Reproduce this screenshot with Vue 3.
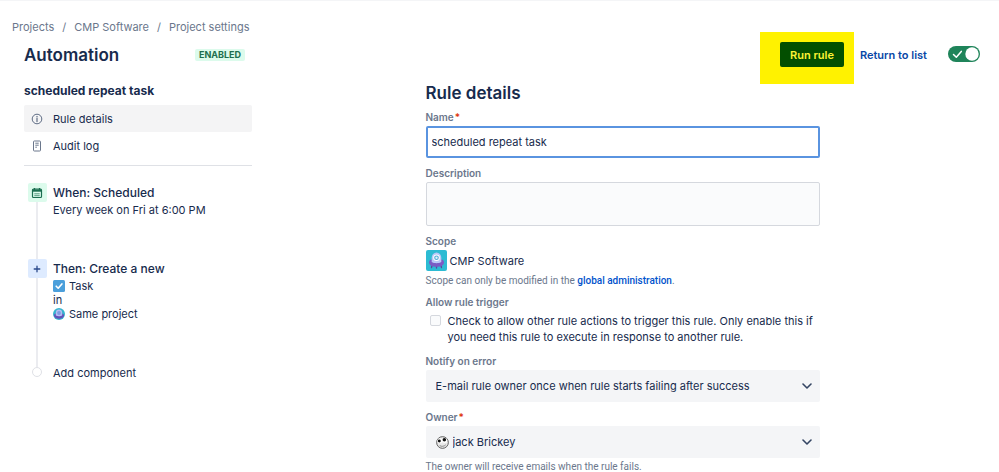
<script setup>
import { ref } from 'vue'

const crumbs = ['Projects', 'CMP Software', 'Project settings']
const enabled = ref(true)
const name = ref('scheduled repeat task')
const description = ref('')
const allowTrigger = ref(false)
const notify = ref('E-mail rule owner once when rule starts failing after success')
const owner = ref('jack Brickey')
</script>

<template>
  <div class="page">
    <nav class="crumbs" aria-label="Breadcrumbs">
      <template v-for="(crumb, i) in crumbs" :key="crumb">
        <span v-if="i > 0" class="slash">/</span>
        <a href="#">{{ crumb }}</a>
      </template>
    </nav>

    <header class="header">
      <div class="heading">
        <h1>Automation</h1>
        <span class="badge">ENABLED</span>
      </div>
      <div class="actions">
        <div class="highlight">
          <button type="button" class="run">Run rule</button>
        </div>
        <a href="#" class="return">Return to list</a>
        <label class="toggle">
          <input v-model="enabled" type="checkbox" role="switch" aria-label="Rule enabled" />
          <svg viewBox="0 0 32 16" width="32" height="16" aria-hidden="true">
            <path d="M5.500 8.500l2.800 2.700 5-5.800" fill="none" stroke="#fff" stroke-width="1.500" stroke-linecap="round" stroke-linejoin="round" />
            <circle cx="24" cy="8" r="6.700" fill="#fff" />
          </svg>
        </label>
      </div>
    </header>

    <div class="body">
      <aside class="sidebar">
        <h2 class="rule-name">{{ name }}</h2>
        <nav class="menu" aria-label="Rule">
          <a href="#" class="item active">
            <svg viewBox="0 0 12 12" width="12" height="12" aria-hidden="true">
              <circle cx="6" cy="6" r="4.800" fill="none" stroke="#5e6c84" />
              <circle cx="6" cy="3.700" r=".750" fill="#5e6c84" />
              <path d="M6 5.400v3.200" stroke="#5e6c84" stroke-width="1.200" stroke-linecap="round" />
            </svg>
            Rule details
          </a>
          <a href="#" class="item">
            <svg viewBox="0 0 12 12" width="12" height="12" aria-hidden="true">
              <rect x="2.500" y="1" width="7" height="10" rx=".8" fill="none" stroke="#6b778c" />
              <path d="M4.300 3.200h3.400M4.300 5.200h3.400M4.300 7.200h1.600" stroke="#6b778c" />
            </svg>
            Audit log
          </a>
        </nav>

        <ol class="chain">
          <li class="step">
            <div class="rail">
              <span class="node trigger">
                <svg viewBox="0 0 12 12" width="12" height="12" aria-hidden="true">
                  <rect x="1.500" y="2.200" width="9" height="8.300" rx="1" fill="none" stroke="#1b6e50" stroke-width="1.200" />
                  <path d="M1.500 3.700h9" stroke="#1b6e50" stroke-width="2" />
                  <path d="M3.500 1v2M8.500 1v2" stroke="#1b6e50" stroke-width="1.200" />
                  <path d="M3.300 6.800h5.400M3.300 8.700h5.400" stroke="#1b6e50" stroke-width=".7" />
                </svg>
              </span>
            </div>
            <div class="info">
              <h3>When: Scheduled</h3>
              <p>Every week on Fri at 6:00 PM</p>
            </div>
          </li>
          <li class="step then">
            <div class="rail">
              <span class="node action">
                <svg viewBox="0 0 12 12" width="12" height="12" aria-hidden="true">
                  <path d="M6 3.200v5.600M3.200 6h5.600" stroke="#2b4a8c" stroke-width="1.300" stroke-linecap="round" />
                </svg>
              </span>
            </div>
            <div class="info">
              <h3>Then: Create a new</h3>
              <p class="with-icon">
                <svg viewBox="0 0 12 12" width="12" height="12" aria-hidden="true">
                  <rect width="12" height="12" rx="1.500" fill="#4b9fdb" />
                  <path d="M3.200 6.200l2 2 3.700-4.300" fill="none" stroke="#fff" stroke-width="1.600" stroke-linecap="round" stroke-linejoin="round" />
                </svg>
                Task
              </p>
              <p>in</p>
              <p class="with-icon">
                <svg viewBox="0 0 12 12" width="12" height="12" aria-hidden="true">
                  <circle cx="6" cy="6" r="6" fill="#35b5cf" />
                  <path d="M1 7.500c0-1 1-1.900 2-1.900h6c1 0 2 .9 2 1.900 0 1.900-2 3.200-5 3.200S1 9.400 1 7.500z" fill="#6450b8" />
                  <path d="M2.800 7.600V5a3.200 3.400 0 0 1 6.400 0v2.600c-1.500 1-4.900 1-6.400 0z" fill="#b4bdf2" />
                  <circle cx="6" cy="5" r="1.900" fill="#7f9be2" />
                </svg>
                Same project
              </p>
            </div>
          </li>
          <li class="step last">
            <div class="rail"><span class="dot"></span></div>
            <button type="button" class="add">Add component</button>
          </li>
        </ol>
      </aside>

      <main class="main">
        <form class="form" @submit.prevent>
          <h2>Rule details</h2>

          <div class="field">
            <label for="name" class="label">Name<span class="req">*</span></label>
            <input id="name" v-model="name" type="text" class="text" />
          </div>

          <div class="field">
            <label for="description" class="label">Description</label>
            <textarea id="description" v-model="description" class="area"></textarea>
          </div>

          <div class="field">
            <span class="label">Scope</span>
            <div class="scope">
              <svg viewBox="0 0 21 21" width="21" height="21" aria-hidden="true">
                <rect width="21" height="21" rx="2" fill="#2cbbd3" />
                <path d="M6 15.500l-.5 2M10.500 16v2M15 15.500l.5 2" stroke="#5a479f" stroke-width="1.300" stroke-linecap="round" />
                <path d="M3 12.200c0-1.500 1.300-2.700 2.700-2.700h9.600c1.400 0 2.700 1.200 2.700 2.700 0 2.900-3 4.600-7.500 4.600S3 15.100 3 12.200z" fill="#7b5bc4" />
                <path d="M5.700 12V7.800a4.800 5.300 0 0 1 9.600 0V12c-2.500 1.600-7.100 1.600-9.600 0z" fill="#b9c8f7" />
                <circle cx="10.500" cy="7.800" r="3.300" fill="#fff" />
                <circle cx="10.500" cy="7.800" r="2.300" fill="#4fa9d6" />
                <circle cx="10.500" cy="7.800" r="1.200" fill="#dff3fb" />
              </svg>
              CMP Software
            </div>
            <p class="note">Scope can only be modified in the <a href="#">global administration</a>.</p>
          </div>

          <div class="field">
            <span class="label">Allow rule trigger</span>
            <label class="check">
              <input v-model="allowTrigger" type="checkbox" />
              <span>Check to allow other rule actions to trigger this rule. Only enable this if you need this rule to execute in response to another rule.</span>
            </label>
          </div>

          <div class="field">
            <label for="notify" class="label">Notify on error</label>
            <div class="select">
              <select id="notify" v-model="notify">
                <option>E-mail rule owner once when rule starts failing after success</option>
              </select>
              <svg viewBox="0 0 10 6" width="10" height="6" aria-hidden="true">
                <path d="M1 1l4 4 4-4" fill="none" stroke="#344563" stroke-width="1.600" stroke-linecap="round" stroke-linejoin="round" />
              </svg>
            </div>
          </div>

          <div class="field">
            <label for="owner" class="label">Owner<span class="req">*</span></label>
            <div class="select">
              <svg viewBox="0 0 14 14" width="13" height="13" aria-hidden="true">
                <circle cx="7" cy="7" r="6.300" fill="#e9e9e9" stroke="#555" />
                <circle cx="4.300" cy="5" r="2.700" fill="#fff" />
                <circle cx="9.300" cy="4.800" r="2.700" fill="#fff" />
                <circle cx="3.600" cy="5.300" r="1.600" fill="#111" />
                <circle cx="9" cy="4" r="1.900" fill="#111" />
                <path d="M4 10.300c1.800 1.300 4.800 1 6.500-.8" fill="none" stroke="#777" stroke-width=".9" />
              </svg>
              <select id="owner" v-model="owner">
                <option>jack Brickey</option>
              </select>
              <svg viewBox="0 0 10 6" width="10" height="6" aria-hidden="true">
                <path d="M1 1l4 4 4-4" fill="none" stroke="#344563" stroke-width="1.600" stroke-linecap="round" stroke-linejoin="round" />
              </svg>
            </div>
            <p class="note owner-note">The owner will receive emails when the rule fails.</p>
          </div>
        </form>
      </main>
    </div>
  </div>
</template>

<style>
body {
  background: #fff;
  overflow-x: hidden;
}
</style>

<style scoped>
.page {
  font: 11px/14px Inter, "Liberation Sans", sans-serif;
  color: #172b4d;
  border-top: 1px solid #f4f5f7;
}
h1, h2, h3, p, ol {
  margin: 0;
  padding: 0;
  list-style: none;
}
a {
  color: inherit;
  text-decoration: none;
}
svg {
  display: block;
  flex: none;
}
input, textarea, select, button {
  font: inherit;
  color: inherit;
  margin: 0;
  box-sizing: border-box;
}
.crumbs {
  display: flex;
  gap: 8px;
  padding: 19px 12px 0;
  height: 12px;
  color: #6b778c;
}
.header {
  display: flex;
  justify-content: space-between;
  align-items: flex-start;
  padding: 0 19px 0 24px;
}
.heading {
  display: flex;
  align-items: center;
  justify-content: space-between;
  width: 221px;
  height: 46px;
}
h1 {
  font-size: 17px;
  line-height: 22px;
  font-weight: 600;
}
.badge {
  background: #dcfbec;
  color: #216e4e;
  font-size: 9px;
  line-height: 12px;
  font-weight: 700;
  padding: 0 4px;
  border-radius: 2px;
}
.actions {
  display: flex;
  align-items: flex-start;
}
.highlight {
  background: #fff200;
  padding: 10px 10px 17px 20px;
}
.run {
  display: block;
  height: 25px;
  padding: 0 10px;
  border: 0;
  border-radius: 2px;
  background: #034f00;
  color: #fdf335;
  font-weight: 600;
}
.return {
  margin: 16px 21px 0 6px;
  color: #0747a6;
  font-weight: 600;
}
.toggle {
  position: relative;
  margin-top: 14px;
}
.toggle input {
  display: block;
  appearance: none;
  width: 32px;
  height: 16px;
  border-radius: 8px;
  background: #1f845a;
}
.toggle svg {
  position: absolute;
  inset: 0;
}
.body {
  display: grid;
  grid-template-columns: 228px minmax(0, 1fr);
  padding: 0 6px 0 24px;
}
.rule-name {
  font-size: 12px;
  line-height: 14px;
  font-weight: 700;
}
.menu {
  margin-top: 7px;
  padding-bottom: 6px;
  border-bottom: 1px solid #dfe1e6;
}
.item {
  display: flex;
  align-items: center;
  gap: 10px;
  height: 27px;
  padding-left: 7px;
  border-radius: 2px;
}
.active {
  background: #f4f4f5;
}
.chain {
  padding: 17px 0 0 3px;
}
.step {
  display: grid;
  grid-template-columns: 20px 1fr;
  column-gap: 6px;
  min-height: 76px;
}
.then {
  min-height: 108px;
}
.last {
  min-height: 12px;
}
.rail {
  display: flex;
  flex-direction: column;
  align-items: center;
}
.step:not(.last) .rail::after {
  content: "";
  flex: 1;
  width: 2px;
  background: #ebecf0;
}
.node {
  display: flex;
  align-items: center;
  justify-content: center;
  width: 19px;
  height: 19px;
  border-radius: 2px;
}
.trigger {
  background: #dcfbec;
}
.action {
  background: #deebff;
}
.dot {
  width: 8px;
  height: 8px;
  border: 1px solid #dfe1e6;
  border-radius: 50%;
}
h3 {
  font-size: 12px;
  line-height: 20px;
  font-weight: 500;
}
.with-icon {
  display: flex;
  align-items: center;
  gap: 4px;
}
.add {
  justify-self: start;
  height: 12px;
  padding: 0;
  border: 0;
  background: none;
  line-height: 12px;
}
.main {
  display: flex;
  justify-content: center;
}
.form {
  width: 100%;
  max-width: 394px;
}
.form h2 {
  font-size: 17px;
  line-height: 18px;
  font-weight: 600;
}
.field {
  margin-top: 9px;
}
.label {
  display: block;
  margin-bottom: 3px;
  font-size: 10px;
  line-height: 12px;
  font-weight: 600;
  color: #6b778c;
}
.req {
  margin-left: 1px;
  color: #de350b;
}
.text {
  display: block;
  width: 100%;
  height: 32px;
  padding: 0 4px;
  border: 2px solid #5a94e0;
  border-radius: 2px;
  background: #fff;
  outline: none;
}
.area {
  display: block;
  width: 100%;
  height: 44px;
  padding: 6px;
  border: 1px solid #d5d8de;
  border-radius: 2px;
  background: #fafbfc;
  resize: none;
}
.scope {
  display: flex;
  align-items: center;
  gap: 3px;
}
.note {
  margin-top: 4px;
  font-family: Roboto, "Liberation Sans", sans-serif;
  font-size: 10px;
  line-height: 12px;
  color: #6b778c;
}
.owner-note {
  margin-top: 3px;
}
.note a {
  color: #0052cc;
  font-weight: 500;
}
.check {
  display: flex;
  gap: 7px;
  padding: 2px 0 1px 4px;
  line-height: 16px;
}
.check input {
  flex: none;
  appearance: none;
  width: 11px;
  height: 11px;
  margin-top: 2px;
  border: 1px solid #d5d8de;
  border-radius: 2px;
  background: #fafbfc;
}
.select {
  display: flex;
  align-items: center;
  gap: 4px;
  height: 32px;
  padding: 0 8px 0 10px;
  border-radius: 2px;
  background: #f4f5f7;
}
.select select {
  flex: 1;
  min-width: 0;
  height: 32px;
  padding: 0;
  border: 0;
  background: none;
  appearance: none;
  outline: none;
}
</style>
